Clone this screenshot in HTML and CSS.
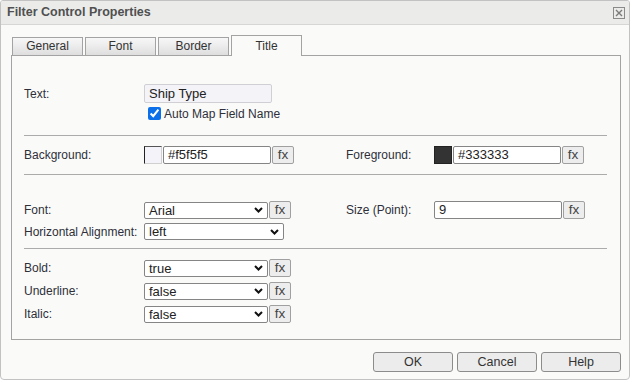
FILE: index.html
```html
<!DOCTYPE html>
<html lang="en">
<head>
  <meta charset="UTF-8" />
  <title>Filter Control Properties</title>
  <link rel="stylesheet" href="styles.css">
</head>
<body>
  <div class="dialog">
    <div class="titlebar">
      <span class="title">Filter Control Properties</span>
      <span class="close">
        <svg width="12" height="12" viewBox="0 0 12 12">
          <rect x="0.5" y="0.5" width="11" height="11" fill="none" stroke="#8a8a8a"/>
          <path d="M3 3 L9 9 M9 3 L3 9" stroke="#7a7a7a" stroke-width="1.4"/>
        </svg>
      </span>
    </div>

    <div class="content">
      <div class="tabs">
        <div class="tab">General</div>
        <div class="tab">Font</div>
        <div class="tab">Border</div>
        <div class="tab active">Title</div>
      </div>

      <div class="panel">
        <!-- TEXT -->
        <div class="row row-text">
          <label class="lbl">Text:</label>
          <div class="input input-wide readonly">Ship Type</div>
        </div>
        <div class="row row-check">
          <span class="lbl"></span>
          <label class="check"><input type="checkbox" checked> Auto Map Field Name</label>
        </div>

        <div class="sep sep-1"></div>

        <!-- COLORS -->
        <div class="row row-color">
          <label class="lbl">Background:</label>
          <div class="ctrl">
            <span class="swatch light"></span>
            <div class="input input-color">#f5f5f5</div>
            <span class="fx">fx</span>
          </div>
          <label class="lbl">Foreground:</label>
          <div class="ctrl">
            <span class="swatch dark"></span>
            <div class="input input-color">#333333</div>
            <span class="fx">fx</span>
          </div>
        </div>

        <div class="sep sep-2"></div>

        <!-- FONT -->
        <div class="row row-font">
          <label class="lbl">Font:</label>
          <div class="ctrl">
            <div class="select">Arial<svg class="chev" width="9" height="6" viewBox="0 0 9 6"><path d="M1 1 L4.5 4.5 L8 1" fill="none" stroke="#111" stroke-width="2"/></svg></div>
            <span class="fx">fx</span>
          </div>
          <label class="lbl">Size (Point):</label>
          <div class="ctrl">
            <div class="input input-wide">9</div>
            <span class="fx">fx</span>
          </div>
        </div>
        <div class="row row-align">
          <label class="lbl">Horizontal Alignment:</label>
          <div class="ctrl">
            <div class="select select-wide">left<svg class="chev" width="9" height="6" viewBox="0 0 9 6"><path d="M1 1 L4.5 4.5 L8 1" fill="none" stroke="#111" stroke-width="2"/></svg></div>
          </div>
        </div>

        <div class="sep sep-3"></div>

        <!-- STYLE -->
        <div class="row row-style first">
          <label class="lbl">Bold:</label>
          <div class="ctrl">
            <div class="select">true<svg class="chev" width="9" height="6" viewBox="0 0 9 6"><path d="M1 1 L4.5 4.5 L8 1" fill="none" stroke="#111" stroke-width="2"/></svg></div>
            <span class="fx">fx</span>
          </div>
        </div>
        <div class="row row-style">
          <label class="lbl">Underline:</label>
          <div class="ctrl">
            <div class="select">false<svg class="chev" width="9" height="6" viewBox="0 0 9 6"><path d="M1 1 L4.5 4.5 L8 1" fill="none" stroke="#111" stroke-width="2"/></svg></div>
            <span class="fx">fx</span>
          </div>
        </div>
        <div class="row row-style">
          <label class="lbl">Italic:</label>
          <div class="ctrl">
            <div class="select">false<svg class="chev" width="9" height="6" viewBox="0 0 9 6"><path d="M1 1 L4.5 4.5 L8 1" fill="none" stroke="#111" stroke-width="2"/></svg></div>
            <span class="fx">fx</span>
          </div>
        </div>
      </div>

      <div class="actions">
        <button class="btn">OK</button>
        <button class="btn">Cancel</button>
        <button class="btn">Help</button>
      </div>
    </div>
  </div>
</body>
</html>
```

FILE: styles.css
```css
:root {
  --bg: #fafbf9;
  --title-bg: #ebecea;
  --border: #a3a3a3;
  --field-border: #858585;
  --text: #2f2f3a;
}

* {
  box-sizing: border-box;
}

body {
  margin: 0;
  font-family: "Liberation Sans", Arial, sans-serif;
  font-size: 12px;
  color: var(--text);
  background: #fff;
}

.dialog {
  width: 630px;
  height: 380px;
  background: var(--bg);
  border: 1px solid #c2c2c2;
  border-radius: 3px 3px 4px 4px;
  overflow: hidden;
}

.titlebar {
  height: 24px;
  background: var(--title-bg);
  border-bottom: 1px solid #d6d7d5;
  display: flex;
  align-items: center;
  justify-content: space-between;
  padding: 0 4px 1px 6px;
}

.title {
  font-weight: bold;
  font-size: 12.5px;
  color: #505050;
}

.close {
  display: flex;
  margin-top: 1px;
}

.content {
  padding: 10px 8px 0 10px;
}

/* tabs */
.tabs {
  display: flex;
  align-items: flex-end;
  height: 20px;
  padding-left: 1px;
  gap: 2px;
}

.tab {
  width: 71px;
  height: 18px;
  border: 1px solid var(--border);
  border-bottom: none;
  background: linear-gradient(#f7f7f7, #efefef 35%, #dedede);
  text-align: center;
  line-height: 17px;
  color: #333;
}

.tab.active {
  height: 21px;
  margin-bottom: -1px;
  background: var(--bg);
  line-height: 20px;
  position: relative;
}

/* panel */
.panel {
  width: 610px;
  height: 285px;
  border: 1px solid var(--border);
  padding: 28px 13px 0 12px;
}

.row {
  display: grid;
  grid-template-columns: 120px 202px 88px 1fr;
  align-items: center;
}

.lbl {
  white-space: nowrap;
}

.ctrl {
  display: flex;
  align-items: center;
  gap: 1px;
}

.row-text {
  height: 19px;
}

.row-check {
  height: 15px;
  margin-top: 3px;
}

.check {
  display: flex;
  align-items: center;
  gap: 3px;
  padding-left: 4px;
}

.check input {
  width: 13px;
  height: 13px;
  margin: 0;
  accent-color: #0a6fe8;
}

.sep {
  height: 1px;
  background: #ababab;
}

.sep-1 { margin-top: 14px; }
.sep-2 { margin-top: 10px; }
.sep-3 { margin-top: 8px; }

.row-color {
  height: 18px;
  margin-top: 10px;
}

.row-font {
  height: 18px;
  margin-top: 26px;
}

.row-align {
  height: 17px;
  margin-top: 4px;
}

.row-style {
  height: 17px;
  margin-top: 6px;
}

.row-style.first {
  margin-top: 10px;
}

/* fields */
.input {
  height: 18px;
  border: 1px solid var(--field-border);
  border-radius: 2px;
  background: #fff;
  padding: 0 4px;
  line-height: 16px;
  font-size: 13px;
  color: #222;
}

.input-wide {
  width: 128px;
}

.row-text .input {
  height: 19px;
  line-height: 17px;
}

.readonly {
  background: #f3f3f8;
  border-color: #cfcfd4;
}

.input-color {
  width: 108px;
}

.swatch {
  width: 18px;
  height: 18px;
  border: 1px solid #d0d0d0;
  border-left-color: #222;
  border-top-color: #555;
}

.swatch.light {
  background: #f3f3f9;
}

.swatch.dark {
  background: #333;
  border-color: #222;
}

.select {
  width: 124px;
  height: 17px;
  border: 1px solid var(--field-border);
  border-radius: 2px;
  background: #fff;
  padding: 0 4px;
  font-size: 13px;
  color: #222;
  display: flex;
  align-items: center;
  justify-content: space-between;
}

.select-wide {
  width: 140px;
}

.fx {
  width: 22px;
  height: 18px;
  border: 1px solid #a0a0a0;
  border-radius: 2px;
  background: #ededed;
  text-align: center;
  line-height: 15px;
  font-size: 13.5px;
  color: #444;
}

/* buttons */
.actions {
  display: flex;
  justify-content: flex-end;
  gap: 4px;
  margin-top: 12px;
  padding-right: 0;
}

.btn {
  width: 80px;
  height: 20px;
  border: 1px solid #8c8c8c;
  border-radius: 3px;
  background: #ececec;
  font-family: inherit;
  font-size: 12.5px;
  color: #333;
  padding: 0;
}
```
